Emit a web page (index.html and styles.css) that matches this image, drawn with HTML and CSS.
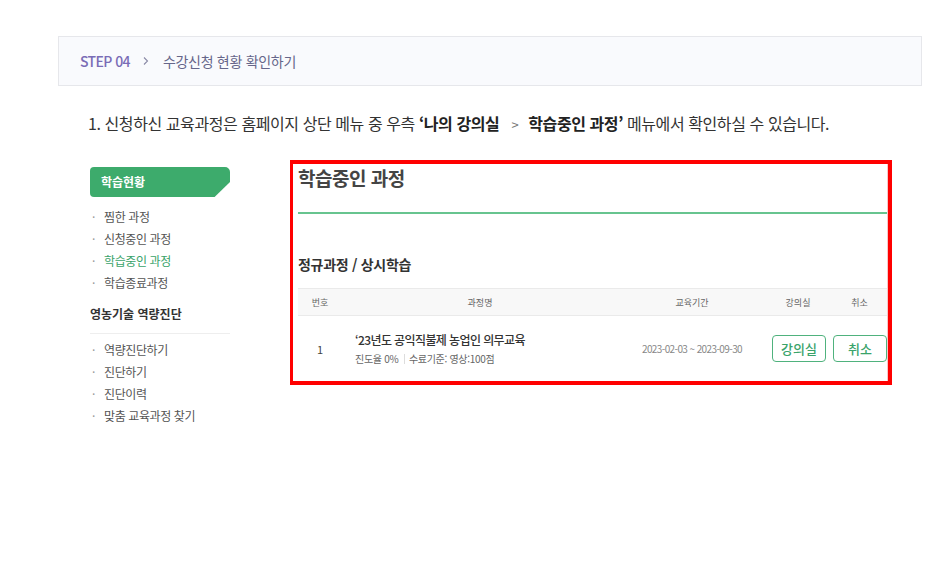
FILE: index.html
```html
<!DOCTYPE html>
<html lang="ko">
<head>
<meta charset="utf-8">
<link rel="stylesheet" href="styles.css">
</head>
<body>
<div class="page">
  <div class="step">
    <span class="step-no">STEP 04</span>
    <span class="step-arrow"><svg width="8" height="10" viewBox="0 0 8 10"><path d="M2 1.5 L5.5 5 L2 8.5" fill="none" stroke="#8a8aa6" stroke-width="1.1"/></svg></span>
    <span class="step-title">수강신청 현황 확인하기</span>
  </div>
  <p class="desc">1. 신청하신 교육과정은 홈페이지 상단 메뉴 중 우측 <b>‘나의 강의실</b> <span class="gt">&gt;</span> <b>학습중인 과정’</b> 메뉴에서 확인하실 수 있습니다.</p>
  <div class="shot">
    <aside class="side">
      <div class="tab">학습현황</div>
      <ul class="menu">
        <li>찜한 과정</li>
        <li>신청중인 과정</li>
        <li class="on">학습중인 과정</li>
        <li>학습종료과정</li>
      </ul>
      <div class="side-head">영농기술 역량진단</div>
      <ul class="menu menu2">
        <li>역량진단하기</li>
        <li>진단하기</li>
        <li>진단이력</li>
        <li>맞춤 교육과정 찾기</li>
      </ul>
    </aside>
    <section class="box">
      <div class="box-in">
        <h2 class="title">학습중인 과정</h2>
        <h3 class="sub">정규과정 / 상시학습</h3>
        <table class="tbl">
          <thead>
            <tr><th class="c-no">번호</th><th class="c-name">과정명</th><th class="c-date">교육기간</th><th class="c-room">강의실</th><th class="c-cancel">취소</th></tr>
          </thead>
          <tbody>
            <tr>
              <td class="c-no">1</td>
              <td class="c-name">
                <div class="cname">‘23년도 공익직불제 농업인 의무교육</div>
                <div class="cinfo">진도율 0% <span class="bar"></span>수료기준: 영상:100점</div>
              </td>
              <td class="c-date">2023-02-03 ~ 2023-09-30</td>
              <td class="c-room"><span class="btn">강의실</span></td>
              <td class="c-cancel"><span class="btn">취소</span></td>
            </tr>
          </tbody>
        </table>
      </div>
    </section>
  </div>
</div>
</body>
</html>
```
FILE: styles.css
```css
* { box-sizing: border-box; }
html, body { margin: 0; padding: 0; background: #fff; }
body { font-family: "Noto Sans CJK KR", "Noto Sans", sans-serif; color: #333; }
.page { padding: 36px 6px 0 58px; }
.step {
  height: 50px;
  border: 1px solid #e6e7eb;
  background: #f9fafd;
  display: flex;
  align-items: center;
  padding-left: 21px;
  font-size: 14px;
}
.step-no { color: #7a6cb6; font-weight: 500; letter-spacing: -0.6px; }
.step-arrow { margin-left: 12px; display: flex; align-items: center; }
.step-title { margin-left: 13px; color: #66668a; letter-spacing: -0.3px; }
.desc {
  margin: 25px 0 0 30px;
  font-size: 16px;
  line-height: 24px;
  color: #333;
  letter-spacing: -0.42px;
}
.desc b { font-weight: 700; color: #222; }
.desc .gt { color: #777; font-size: 13px; margin: 0 6px 0 8px; }
.shot { display: flex; align-items: flex-start; margin-top: 23px; margin-left: 32px; }
.side { width: 140px; padding-top: 7px; }
.tab {
  height: 30px;
  background: #3dab6c;
  color: #fff;
  font-size: 12px;
  font-weight: 700;
  line-height: 30px;
  padding-left: 11px;
  border-radius: 4px 5px 0 4px;
  clip-path: polygon(0 0, 100% 0, 100% 50%, 89% 100%, 0 100%);
}
.menu { list-style: none; margin: 9px 0 0; padding: 0; }
.menu li {
  font-size: 12px;
  line-height: 22px;
  color: #555;
  padding-left: 14px;
  position: relative;
  letter-spacing: -0.4px;
}
.menu li::before {
  content: "·";
  position: absolute;
  left: 2px;
  top: 0;
  color: #999;
}
.menu li.on { color: #3aa36a; }
.side-head {
  margin-top: 9px;
  font-size: 12px;
  font-weight: 700;
  color: #333;
  line-height: 22px;
  padding-bottom: 8px;
  border-bottom: 1px solid #eeeeee;
}
.menu2 { margin-top: 5px; }
.box {
  margin-left: 60px;
  width: 602px;
  height: 225px;
  border: 4px solid #ff0000;
  border-left-width: 3px;
}
.box-in {
  height: 100%;
  border-right: 1px solid #f6c8c8;
  padding: 0 0 0 5px;
}
.title {
  margin: 0;
  padding-top: 2px;
  font-size: 19px;
  font-weight: 700;
  color: #444;
  line-height: 24px;
  letter-spacing: -0.5px;
  height: 50px;
  border-bottom: 2px solid #67c48f;
}
.sub {
  margin: 40px 0 0;
  font-size: 14px;
  font-weight: 700;
  color: #333;
  line-height: 20px;
  letter-spacing: -0.3px;
}
.tbl {
  width: 100%;
  border-collapse: collapse;
  margin-top: 14px;
}
.tbl th {
  height: 27px;
  background: #f8f8f8;
  border-top: 1px solid #eaeaea;
  border-bottom: 1px solid #eaeaea;
  font-size: 9px;
  font-weight: 400;
  color: #666;
  padding: 0;
}
.tbl td { height: 66px; padding: 0; font-size: 10px; color: #555; }
.c-no { width: 44px; text-align: center; }
.tbl td.c-no { font-size: 11px; color: #444; }
td.c-name { padding-left: 13px !important; text-align: left; }
th.c-name { text-align: center; }
.c-date { width: 148px; text-align: center; }
td.c-date { color: #888; letter-spacing: -0.6px; }
.c-room { width: 60px; }
td.c-room { text-align: right; }
th.c-room { text-align: center; padding-left: 4px !important; }
.c-cancel { width: 61px; }
td.c-cancel { text-align: right; }
th.c-cancel { text-align: center; padding-left: 6px !important; }
.cname { font-size: 12px; font-weight: 500; color: #333; line-height: 16px; letter-spacing: -0.6px; }
.cinfo { margin-top: 4px; font-size: 10px; color: #666; line-height: 14px; letter-spacing: -0.3px; }
.bar { display: inline-block; width: 1px; height: 10px; background: #ddd; vertical-align: -1px; margin: 0 4px 0 3px; }
.btn {
  display: inline-flex;
  align-items: center;
  justify-content: center;
  width: 54px;
  height: 27px;
  border: 1.5px solid #4fb27d;
  border-radius: 4px;
  color: #3aa36a;
  font-size: 13px;
  font-weight: 500;
  background: #fff;
  vertical-align: middle;
}
```
